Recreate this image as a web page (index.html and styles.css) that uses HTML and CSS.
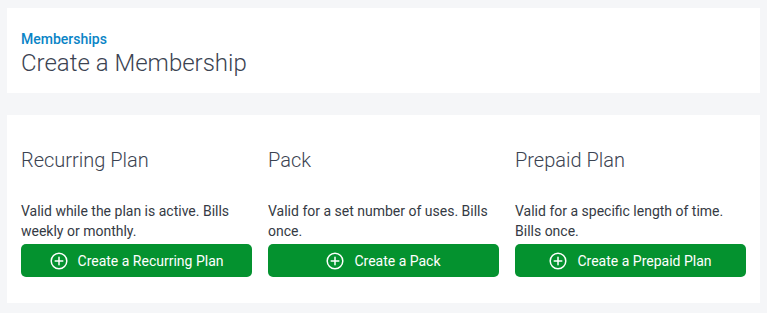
FILE: index.html
```html
<!DOCTYPE html>
<html>
<head>
<meta charset="utf-8">
<link rel="stylesheet" href="styles.css">
</head>
<body>
<div class="page">
  <header class="card header">
    <a class="crumb" href="#">Memberships</a>
    <h1 class="title">Create a Membership</h1>
  </header>
  <section class="card plans">
    <div class="plan">
      <h2 class="plan-name">Recurring Plan</h2>
      <p class="plan-desc">Valid while the plan is active. Bills weekly or monthly.</p>
      <button class="btn"><svg class="icon" viewBox="0 0 18 18" width="18" height="18"><circle cx="9" cy="9" r="7.8" fill="none" stroke="#fff" stroke-width="1.5"/><path d="M9 5.2v7.6M5.2 9h7.6" stroke="#fff" stroke-width="1.5" stroke-linecap="round"/></svg><span>Create a Recurring Plan</span></button>
    </div>
    <div class="plan">
      <h2 class="plan-name">Pack</h2>
      <p class="plan-desc">Valid for a set number of uses. Bills once.</p>
      <button class="btn"><svg class="icon" viewBox="0 0 18 18" width="18" height="18"><circle cx="9" cy="9" r="7.8" fill="none" stroke="#fff" stroke-width="1.5"/><path d="M9 5.2v7.6M5.2 9h7.6" stroke="#fff" stroke-width="1.5" stroke-linecap="round"/></svg><span>Create a Pack</span></button>
    </div>
    <div class="plan">
      <h2 class="plan-name">Prepaid Plan</h2>
      <p class="plan-desc">Valid for a specific length of time. Bills once.</p>
      <button class="btn"><svg class="icon" viewBox="0 0 18 18" width="18" height="18"><circle cx="9" cy="9" r="7.8" fill="none" stroke="#fff" stroke-width="1.5"/><path d="M9 5.2v7.6M5.2 9h7.6" stroke="#fff" stroke-width="1.5" stroke-linecap="round"/></svg><span>Create a Prepaid Plan</span></button>
    </div>
  </section>
</div>
</body>
</html>
```
FILE: styles.css
```css
* { box-sizing: border-box; }
html, body {
  margin: 0;
  padding: 0;
  background: #f5f6f8;
  font-family: Roboto, "Liberation Sans", sans-serif;
  color: #3b4351;
}
.page {
  padding: 8px 7px 10px 7px;
  display: flex;
  flex-direction: column;
  gap: 22px;
}
.card {
  background: #fff;
}
.header {
  padding: 21px 14px 15px;
  display: flex;
  flex-direction: column;
}
.crumb {
  font-size: 14px;
  line-height: 20px;
  font-weight: 500;
  color: #0a84c6;
  text-decoration: none;
}
.title {
  margin: 0;
  font-size: 24px;
  font-weight: 300;
  line-height: 29px;
  color: #3b4351;
}
.plans {
  padding: 33px 14px 26px;
  display: grid;
  grid-template-columns: repeat(3, 1fr);
  column-gap: 16px;
}
.plan {
  display: flex;
  flex-direction: column;
}
.plan-name {
  margin: 0;
  font-size: 20px;
  font-weight: 300;
  line-height: 24px;
  color: #3b4351;
}
.plan-desc {
  margin: 29px 0 3px;
  font-size: 14px;
  line-height: 20px;
  color: #353a44;
  flex: 1;
}
.btn {
  height: 33px;
  border: 0;
  border-radius: 5px;
  background: #04922f;
  color: #fff;
  font-family: inherit;
  font-size: 14px;
  display: flex;
  align-items: center;
  justify-content: center;
  gap: 10px;
  padding: 0;
}
.icon { display: block; }
```
